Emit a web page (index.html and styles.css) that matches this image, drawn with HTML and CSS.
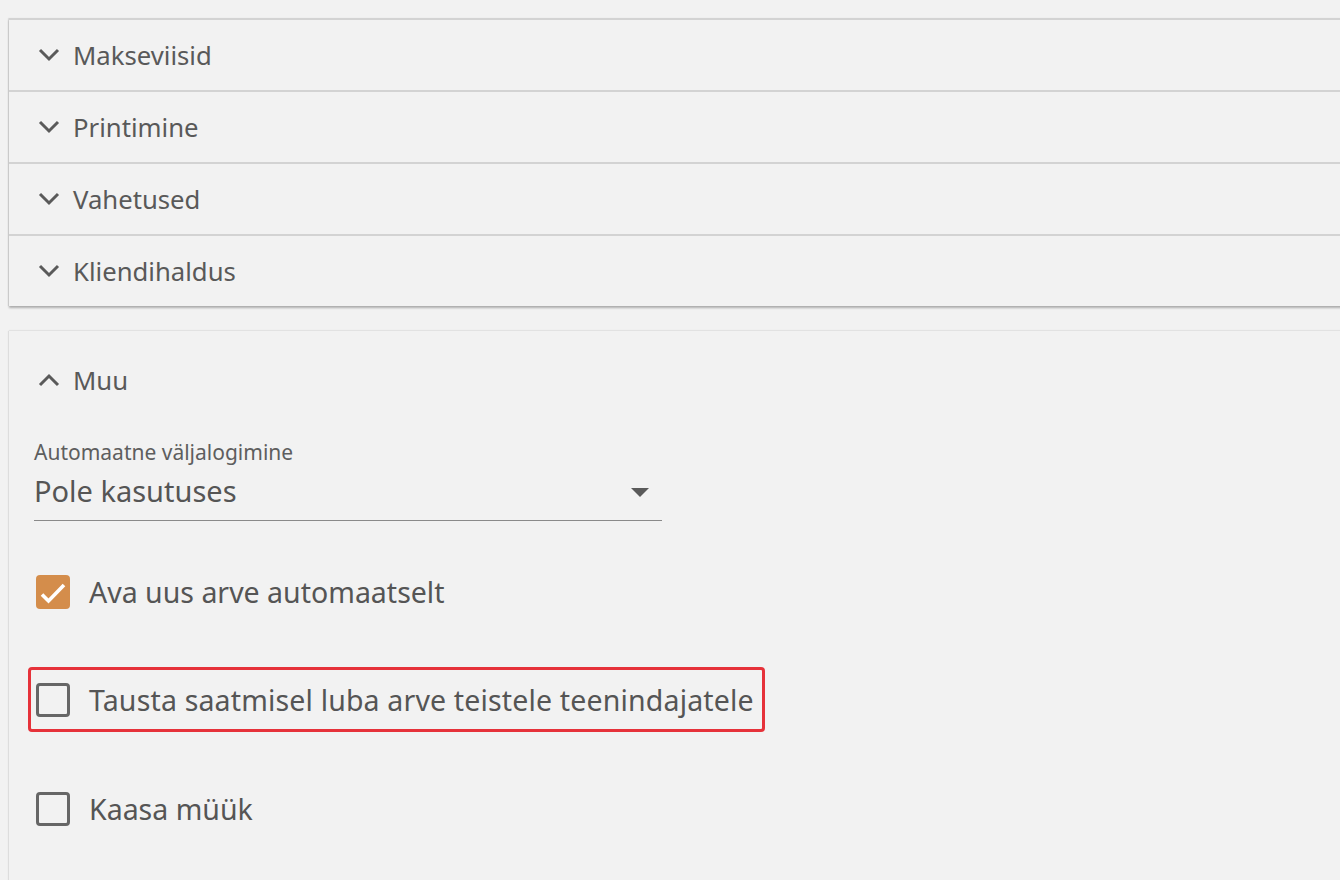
FILE: index.html
```html
<!DOCTYPE html>
<html lang="et">
<head>
<meta charset="utf-8">
<title>Seaded</title>
<link rel="stylesheet" href="styles.css">
</head>
<body>
<div class="page">
  <div class="panel panel-list">
    <div class="row">
      <svg class="chev" viewBox="0 0 22 14" width="22" height="14"><path d="M2 2 L11 11 L20 2" fill="none" stroke="#5a5a5a" stroke-width="3"/></svg>
      <span class="row-title">Makseviisid</span>
    </div>
    <div class="row">
      <svg class="chev" viewBox="0 0 22 14" width="22" height="14"><path d="M2 2 L11 11 L20 2" fill="none" stroke="#5a5a5a" stroke-width="3"/></svg>
      <span class="row-title">Printimine</span>
    </div>
    <div class="row">
      <svg class="chev" viewBox="0 0 22 14" width="22" height="14"><path d="M2 2 L11 11 L20 2" fill="none" stroke="#5a5a5a" stroke-width="3"/></svg>
      <span class="row-title">Vahetused</span>
    </div>
    <div class="row">
      <svg class="chev" viewBox="0 0 22 14" width="22" height="14"><path d="M2 2 L11 11 L20 2" fill="none" stroke="#5a5a5a" stroke-width="3"/></svg>
      <span class="row-title">Kliendihaldus</span>
    </div>
  </div>

  <div class="panel panel-open">
    <div class="open-head">
      <svg class="chev" viewBox="0 0 22 14" width="22" height="14"><path d="M2 12 L11 3 L20 12" fill="none" stroke="#5a5a5a" stroke-width="3"/></svg>
      <span class="row-title">Muu</span>
    </div>
    <div class="content">
      <div class="field">
        <div class="field-label">Automaatne väljalogimine</div>
        <div class="select">
          <span class="select-value">Pole kasutuses</span>
          <span class="caret"></span>
        </div>
      </div>

      <div class="check-row first">
        <span class="box box-on">
          <svg viewBox="0 0 34 34" width="34" height="34"><path d="M6 19.5 L12.5 26 L28 10" fill="none" stroke="#fff" stroke-width="3.6"/></svg>
        </span>
        <span class="check-label">Ava uus arve automaatselt</span>
      </div>

      <div class="check-row highlight">
        <span class="box"></span>
        <span class="check-label wide">Tausta saatmisel luba arve teistele teenindajatele</span>
      </div>

      <div class="check-row last">
        <span class="box"></span>
        <span class="check-label">Kaasa müük</span>
      </div>
    </div>
  </div>
</div>
</body>
</html>
```

FILE: styles.css
```css
html, body {
  margin: 0;
  padding: 0;
  background: #f2f2f2;
  overflow: hidden;
}

body {
  width: 1340px;
  height: 880px;
  font-family: "Noto Sans", "Open Sans", sans-serif;
  color: #585858;
}

.page {
  padding: 18px 0 0 9px;
}

.panel {
  background: #f2f2f2;
  margin-right: -30px;
}

.panel-list {
  box-shadow: 0 2px 2px rgba(0, 0, 0, 0.28), -1px 0 1px rgba(0, 0, 0, 0.08);
}

.row {
  height: 70px;
  border-top: 2px solid #d3d3d3;
  display: flex;
  align-items: center;
  padding-left: 29px;
}

.chev {
  display: block;
  width: 22px;
  height: 14px;
  margin-right: 13px;
  flex: none;
}

.row-title {
  font-size: 25.7px;
  line-height: 1;
  color: #595959;
  position: relative;
  top: 1px;
}

.panel-open {
  margin-top: 25px;
  height: 560px;
  box-shadow: 0 -1px 1px rgba(0, 0, 0, 0.05), -1px 0 1px rgba(0, 0, 0, 0.08);
}

.open-head {
  height: 98px;
  display: flex;
  align-items: center;
  padding-left: 29px;
}

.content {
  padding-left: 25px;
}

.field {
  width: 628px;
  padding-top: 11px;
}

.field-label {
  font-size: 21px;
  line-height: 24px;
  color: #5e5e5e;
}

.select {
  display: flex;
  align-items: center;
  justify-content: space-between;
  padding: 10px 13px 12px 0;
  border-bottom: 1px solid #8a8a8a;
}

.select-value {
  font-size: 29px;
  line-height: 34px;
  color: #555;
}

.caret {
  width: 0;
  height: 0;
  border-left: 9px solid transparent;
  border-right: 9px solid transparent;
  border-top: 9px solid #5a5a5a;
  margin-top: 2px;
}

.check-row {
  display: flex;
  align-items: center;
  height: 64px;
  padding-left: 2px;
  width: max-content;
}

.check-row.first {
  margin-top: 39px;
}

.check-row.last {
  margin-top: 45px;
}

.highlight {
  margin-top: 43px;
  border: 3px solid #e6323a;
  border-radius: 4px;
  margin-left: -6px;
  padding-left: 5px;
  padding-right: 8px;
  height: 59px;
}

.box {
  width: 34px;
  height: 34px;
  box-sizing: border-box;
  border: 3px solid #666;
  border-radius: 4px;
  flex: none;
  margin-right: 19px;
}

.box-on {
  border: none;
  background: #d48d4b;
}

.box-on svg {
  display: block;
}

.check-label {
  font-size: 28.5px;
  color: #555;
}

.check-label.wide {
  letter-spacing: 0.16px;
}
```
